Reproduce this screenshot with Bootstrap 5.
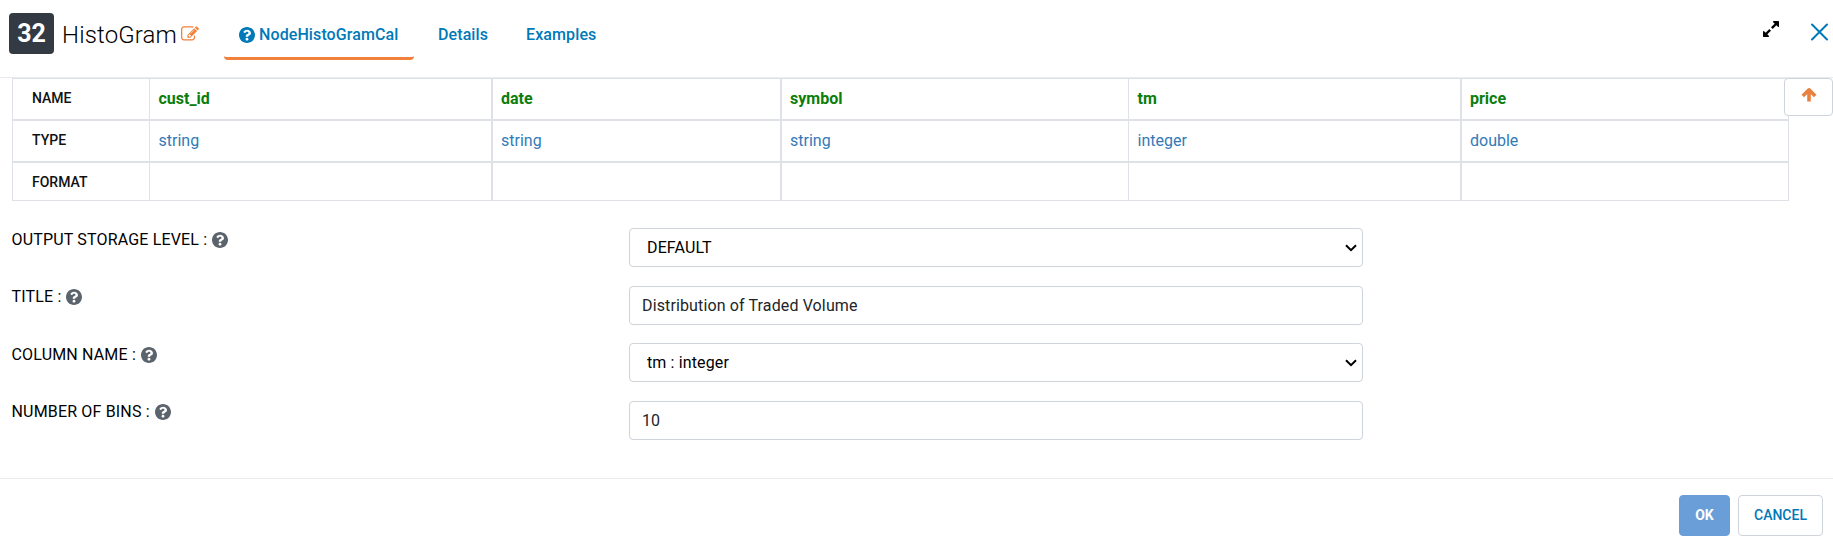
<!DOCTYPE html>
<html lang="en">
<head>
<meta charset="utf-8">
<meta name="viewport" content="width=device-width, initial-scale=1">
<title>HistoGram</title>
<link href="https://cdn.jsdelivr.net/npm/bootstrap@5.3.0/dist/css/bootstrap.min.css" rel="stylesheet">
<style>
  body { font-family: Roboto, "Liberation Sans", sans-serif; font-size: 16px; color: #212529; background: #fff; height: 547px; overflow: hidden; }
  .node-head { height: 78px; border-bottom: 1px solid #e9ecef; padding-left: 9px; }
  .node-num { width: 45px; height: 41px; margin-top: 13px; background: #343a43; color: #fff; border-radius: 4px; font-size: 25px; font-weight: 700; line-height: 41px; text-align: center; }
  .node-title { margin: 17px 0 0 8px; font-size: 24px; font-weight: 300; line-height: 36px; width: 119px; white-space: nowrap; color: #000; letter-spacing: .15px; }
  .edit-ico { margin-top: 25px; }
  .node-tabs { margin: 9px 0 0 25px; letter-spacing: .1px; }
  .node-tabs .nav-link { height: 51px; padding: 3px 15px 0; line-height: 24px; color: #0079b8; font-weight: 500; display: flex; align-items: center; border-bottom: 3px solid transparent; border-radius: 4px; white-space: nowrap; }
  .node-tabs .nav-link.active { border-bottom-color: #f0803c; width: 190px; margin-right: 1px; }
  .head-tools { margin-right: 5px; }
  .expand-ico { margin: 21px 32px 0 0; }
  .close-ico { margin-top: 23px; }
  .schema-wrap { padding-left: 12px; }
  .schema { width: 1777px; table-layout: fixed; border-collapse: separate; border-spacing: 0; margin: 0; }
  .schema td, .schema th { border: 0 solid #dee2e6; border-left-width: 1px; border-top-width: 2px; padding: 0; vertical-align: middle; line-height: 20px; }
  .schema tr:first-child > * { border-top-width: 1px; }
  .schema tr:last-child > * { border-bottom-width: 1px; }
  .schema tr > *:last-child { border-right-width: 1px; }
  .schema th { font-size: 14px; font-weight: 500; padding: 0 0 3px 19px; color: #111; }
  .schema td { color: #337ab7; }
  .schema tr > .wide-line { border-left-width: 2px; padding-left: 8px; }
  .schema tr > .thin-line { padding-left: 8.5px; }
  .schema tr:first-child td { color: #0b7d0b; font-weight: 700; }
  .schema tr:last-child th { padding-bottom: 0; }
  .col-head { width: 137px; } .col-cust { width: 342px; } .col-date { width: 289px; }
  .col-symbol { width: 348px; } .col-tm { width: 332px; } .col-price { width: 329px; }
  .up-btn { right: 0; top: 78px; width: 49px; height: 38px; border: 1px solid #ced4da; border-radius: 4px; background: #fff; }
  .node-form { padding: 27px 0 0 11.5px; height: 277px; letter-spacing: .13px; }
  .form-line { height: 57.6px; }
  .form-line label { width: 617.5px; line-height: 24px; color: #000; display: flex; align-items: center; height: 23px; letter-spacing: .17px; }
  .form-line label svg { margin-left: 5px; }
  .form-line .form-control { width: 734px; height: 39px; border: 1px solid #ced4da; border-radius: 4px; padding: 6px 12px; color: #212529; letter-spacing: .13px; }
  .form-line input.form-control { height: 39.5px; }
  .form-line select.form-control { padding-left: 17px; color: #000; background: #fff url("data:image/svg+xml,%3Csvg xmlns='http://www.w3.org/2000/svg' viewBox='0 0 12 8'%3E%3Cpath d='M1 1.200 6 6.200 11 1.200' fill='none' stroke='%23000' stroke-width='2'/%3E%3C/svg%3E") no-repeat right 5px top 15px / 12px 8px; }
  .node-foot { border-top: 1px solid #e9ecef; padding: 16px 10px 0 0; gap: 8px; }
  .node-foot .btn { height: 41px; font-size: 14px; font-weight: 500; border-radius: 4px; padding: 0; }
  .ok-btn { width: 51px; background: #6a9ed9; border-color: #6a9ed9; color: #fff; }
  .node-foot .ok-btn { font-weight: 700; }
  .cancel-btn { width: 85px; color: #0079b8; border-color: #ced4da; background: #fff; }
</style>
</head>
<body>
<svg class="d-none">
  <symbol id="help" viewBox="8 8 496 496"><path fill="currentColor" d="M504 256c0 137-111 248-248 248S8 393 8 256C8 119.100 119 8 256 8s248 111.100 248 248zM262.700 90c-54.500 0-89.300 23-116.500 63.800-3.500 5.300-2.400 12.400 2.700 16.300l34.700 26.300c5.200 3.900 12.600 3 16.700-2.100 17.900-22.700 30.100-35.800 57.300-35.800 20.400 0 45.700 13.100 45.700 33 0 15-12.400 22.700-32.500 34C247.100 238.500 216 254.900 216 296v4c0 6.600 5.400 12 12 12h56c6.600 0 12-5.400 12-12v-1.300c0-28.500 83.200-29.600 83.200-106.700 0-58-60.200-102-116.500-102zM256 338c-25.400 0-46 20.600-46 46s20.600 46 46 46 46-20.600 46-46-20.600-46-46-46z"/></symbol>
</svg>

<header class="node-head d-flex align-items-start">
  <div class="node-num">32</div>
  <div class="node-title">HistoGram</div>
  <svg class="edit-ico" width="18" height="18" viewBox="0 0 1792 1792"><path fill="#f0803c" d="M888 1184l116-116-152-152-116 116v56h96v96h56zm440-720q-16-16-33 1l-350 350q-17 17-1 33t33-1l350-350q17-17 1-33zm80 594v190q0 119-84.500 203.500t-203.500 84.500h-832q-119 0-203.500-84.500t-84.500-203.500v-832q0-119 84.500-203.500t203.500-84.500h832q63 0 117 25 15 7 18 23 3 17-9 29l-49 49q-14 14-32 8-23-6-45-6h-832q-66 0-113 47t-47 113v832q0 66 47 113t113 47h832q66 0 113-47t47-113v-126q0-13 9-22l64-64q15-15 35-7t20 29zm-96-738l288 288-672 672h-288v-288zm444 132l-92 92-288-288 92-92q28-28 68-28t68 28l152 152q28 28 28 68t-28 68z"/></svg>
  <nav class="nav node-tabs">
    <a class="nav-link active" href="#"><svg width="16" height="16" class="me-1"><use href="#help"/></svg>NodeHistoGramCal</a>
    <a class="nav-link ms-2" href="#">Details</a>
    <a class="nav-link ms-2" href="#">Examples</a>
  </nav>
  <div class="head-tools ms-auto d-flex">
    <svg class="expand-ico" width="16" height="16" viewBox="128 128 1536 1536"><path d="M883 1056q0 13-10 23l-332 332 144 144q19 19 19 45t-19 45-45 19h-448q-26 0-45-19t-19-45v-448q0-26 19-45t45-19 45 19l144 144 332-332q10-10 23-10t23 10l114 114q10 10 10 23zm781-864v448q0 26-19 45t-45 19-45-19l-144-144-332 332q-10 10-23 10t-23-10l-114-114q-10-10-10-23t10-23l332-332-144-144q-19-19-19-45t19-45 45-19h448q26 0 45 19t19 45z"/></svg>
    <svg class="close-ico" width="17" height="18" viewBox="0 0 17 18"><path d="M1 1.500 16 16.500M16 1.500 1 16.500" stroke="#0079b8" stroke-width="2" stroke-linecap="round"/></svg>
  </div>
</header>

<button class="up-btn position-absolute p-0 d-flex align-items-center justify-content-center" type="button" aria-label="Up">
  <svg width="16" height="16" viewBox="0 0 16 16" class="mb-1"><path d="M8 14.500V3M1.800 9 8 2.800 14.200 9" fill="none" stroke="#e8803f" stroke-width="3.600" stroke-linejoin="round"/></svg>
</button>

<div class="schema-wrap">
  <table class="schema">
    <colgroup><col class="col-head"><col class="col-cust"><col class="col-date"><col class="col-symbol"><col class="col-tm"><col class="col-price"></colgroup>
    <tbody>
      <tr style="height:41px"><th>NAME</th><td class="thin-line">cust_id</td><td class="wide-line">date</td><td class="wide-line">symbol</td><td class="thin-line">tm</td><td class="wide-line">price</td></tr>
      <tr style="height:42px"><th>TYPE</th><td class="thin-line">string</td><td class="wide-line">string</td><td class="wide-line">string</td><td class="thin-line">integer</td><td class="wide-line">double</td></tr>
      <tr style="height:40px"><th>FORMAT</th><td></td><td class="wide-line"></td><td class="wide-line"></td><td class="thin-line"></td><td class="wide-line"></td></tr>
    </tbody>
  </table>
</div>

<form class="node-form">
  <div class="form-line d-flex"><label for="level">OUTPUT STORAGE LEVEL :<svg width="16" height="16" color="#5b636c"><use href="#help"/></svg></label>
    <select id="level" class="form-control"><option>DEFAULT</option></select></div>
  <div class="form-line d-flex"><label for="ttl">TITLE :<svg width="16" height="16" color="#5b636c"><use href="#help"/></svg></label>
    <input id="ttl" class="form-control" value="Distribution of Traded Volume"></div>
  <div class="form-line d-flex"><label for="colname">COLUMN NAME :<svg width="16" height="16" color="#5b636c"><use href="#help"/></svg></label>
    <select id="colname" class="form-control"><option>tm : integer</option></select></div>
  <div class="form-line d-flex"><label for="bins">NUMBER OF BINS :<svg width="16" height="16" color="#5b636c"><use href="#help"/></svg></label>
    <input id="bins" class="form-control" value="10"></div>
</form>

<footer class="node-foot d-flex justify-content-end">
  <button type="button" class="btn ok-btn">OK</button>
  <button type="button" class="btn cancel-btn">CANCEL</button>
</footer>
<script src="https://cdn.jsdelivr.net/npm/bootstrap@5.3.0/dist/js/bootstrap.bundle.min.js"></script>
</body>
</html>
